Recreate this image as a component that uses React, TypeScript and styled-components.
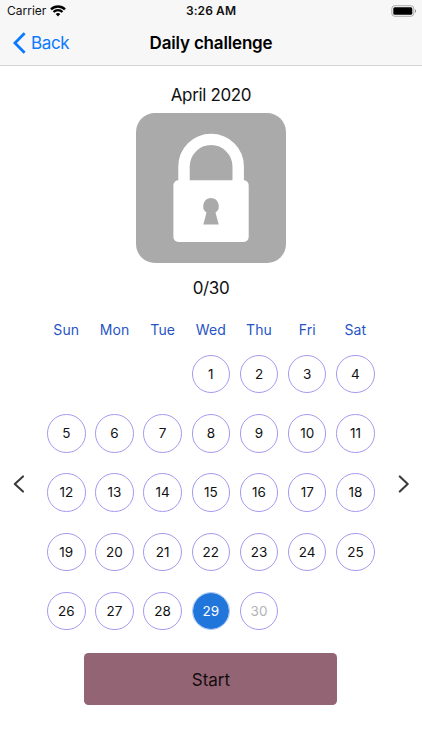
import React from "react";
import styled, { createGlobalStyle } from "styled-components";

const GlobalStyle = createGlobalStyle`
  *, *::before, *::after { box-sizing: border-box; }
  body { margin: 0; background: #fff; font-family: Inter, "Liberation Sans", sans-serif; color: #111; }
  button { font: inherit; color: inherit; background: none; border: 0; padding: 0; }
  svg { display: block; }
`;

const Screen = styled.div`
  width: 422px;
  height: 750px;
  display: flex;
  flex-direction: column;
  overflow: hidden;
`;

const Header = styled.header`
  height: 66px;
  flex: none;
  background: #f7f7f7;
  border-bottom: 1px solid #d4d4d4;
`;

const Bar = styled.div<{ $height: number }>`
  height: ${(p) => p.$height}px;
  display: grid;
  grid-template-columns: 1fr auto 1fr;
  align-items: center;
`;

const Carrier = styled.div`
  display: flex;
  align-items: center;
  gap: 4px;
  padding-left: 7px;
  font-size: 12px;
  letter-spacing: 0;
`;

const Clock = styled.div`
  font-size: 12px;
  font-weight: 600;
  letter-spacing: 0.1px;
`;

const BatterySlot = styled.div`
  justify-self: end;
  padding-right: 5px;
`;

const Back = styled.button`
  justify-self: start;
  display: flex;
  align-items: center;
  gap: 5px;
  padding-left: 13px;
  color: #0a7aff;
  font-size: 17px;
  letter-spacing: -0.35px;
`;

const Title = styled.h1`
  margin: 0;
  font-size: 17px;
  font-weight: 600;
  letter-spacing: -0.17px;
  color: #000;
`;

const Summary = styled.section`
  display: flex;
  flex-direction: column;
  align-items: center;
  padding-top: 18px;
`;

const Label = styled.div<{ $gap?: number }>`
  height: 22px;
  margin-top: ${(p) => p.$gap ?? 0}px;
  line-height: 22px;
  font-size: 17px;
  letter-spacing: -0.35px;
`;

const Badge = styled.div`
  width: 150px;
  height: 150px;
  margin-top: 7px;
  border-radius: 19px;
  background: #aaa;
`;

const CalendarRow = styled.section`
  display: grid;
  grid-template-columns: 42px 338px 42px;
  margin-top: 21px;
`;

const Arrow = styled.button<{ $side: "left" | "right" }>`
  display: flex;
  justify-content: ${(p) => (p.$side === "left" ? "flex-start" : "flex-end")};
  padding: 0 13px;
  height: 20px;
  margin-top: 154.3px;
`;

const Month = styled.div`
  display: grid;
  grid-template-columns: repeat(7, 48.2px);
  grid-template-rows: 19px;
  grid-auto-rows: 59.25px;
  justify-items: center;
  padding-left: 0.2px;
`;

const Weekday = styled.div`
  font-size: 14px;
  line-height: 19px;
  letter-spacing: 0.1px;
  color: #2754c5;
`;

const Day = styled.button<{ $first: boolean; $state: "open" | "today" | "future" }>`
  width: 38.5px;
  height: 38.5px;
  margin-top: 15.9px;
  grid-column-start: ${(p) => (p.$first ? 4 : "auto")};
  border: 1px solid ${(p) => (p.$state === "today" ? "#a9c6f2" : "#a59af0")};
  border-radius: 50%;
  background: ${(p) => (p.$state === "today" ? "#2176db" : "#fff")};
  background-clip: padding-box;
  color: ${(p) => ({ open: "#111", today: "#fff", future: "#b3b3b3" })[p.$state]};
  font-size: 13.5px;
  line-height: 36.5px;
  text-align: center;
`;

const Start = styled.button`
  flex: none;
  width: 253px;
  height: 52px;
  margin: 18px 0 0 84.4px;
  padding-top: 1px;
  border-radius: 4.5px;
  background: #936474;
  color: #140c10;
  font-size: 17px;
`;

const weekdays = ["Sun", "Mon", "Tue", "Wed", "Thu", "Fri", "Sat"];
const days = Array.from({ length: 30 }, (_, i) => i + 1);
const today = 29;

const stateOf = (day: number) => (day === today ? "today" : day > today ? "future" : "open");

function WifiIcon() {
  return (
    <svg width="16" height="12" viewBox="0 0 16 12" fill="none" stroke="#000" strokeWidth="2.3">
      <path d="M1 4.4a9.9 9.9 0 0 1 14 0" />
      <path d="M3.5 7a6.4 6.4 0 0 1 9 0" />
      <path d="M5.7 9.1a3.3 3.3 0 0 1 4.6 0L8 11.5z" fill="#000" stroke="none" />
    </svg>
  );
}

function BatteryIcon() {
  return (
    <svg width="26" height="12" viewBox="0 0 26 12">
      <rect x="0.8" y="0.7" width="22" height="10.6" rx="3" fill="none" stroke="#aaa" />
      <rect x="2.3" y="2.2" width="19" height="7.6" rx="1.5" fill="#000" />
      <path d="M24 4.2c1.4.5 1.4 3.1 0 3.6z" fill="#888" />
    </svg>
  );
}

function PadlockIcon() {
  return (
    <svg width="150" height="150" viewBox="0 0 150 150">
      <path d="M48 72V53.5a27.1 27.1 0 0 1 54.2 0V72" fill="none" stroke="#fff" strokeWidth="11.4" />
      <rect x="37.4" y="67.2" width="75.3" height="61.8" rx="5" fill="#fff" />
      <path d="M75 85a8.1 8.1 0 0 1 4.5 14.6L82.7 111.4H67.3L70.5 99.6A8.1 8.1 0 0 1 75 85z" fill="#aaa" />
    </svg>
  );
}

function Chevron({ d }: { d: string }) {
  return (
    <svg width="12" height="20" viewBox="0 0 12 20" fill="none" stroke="#3c3c3f" strokeWidth="2.1">
      <path d={d} strokeLinecap="round" strokeLinejoin="round" />
    </svg>
  );
}

export default function App() {
  return (
    <Screen>
      <GlobalStyle />
      <Header>
        <Bar $height={21}>
          <Carrier>
            Carrier
            <WifiIcon />
          </Carrier>
          <Clock>3:26 AM</Clock>
          <BatterySlot>
            <BatteryIcon />
          </BatterySlot>
        </Bar>
        <Bar $height={44}>
          <Back>
            <svg width="13" height="22" viewBox="0 0 13 22" fill="none" stroke="currentColor" strokeWidth="2.8">
              <path d="M11.6 1.2 1.9 11l9.7 9.8" />
            </svg>
            Back
          </Back>
          <Title>Daily challenge</Title>
        </Bar>
      </Header>
      <Summary>
        <Label>April 2020</Label>
        <Badge>
          <PadlockIcon />
        </Badge>
        <Label $gap={14}>0/30</Label>
      </Summary>
      <CalendarRow>
        <Arrow $side="left" aria-label="Previous month">
          <Chevron d="M10 2.4 1.8 10l8.2 7.6" />
        </Arrow>
        <Month>
          {weekdays.map((name) => (
            <Weekday key={name}>{name}</Weekday>
          ))}
          {days.map((day) => (
            <Day key={day} $first={day === 1} $state={stateOf(day)}>
              {day}
            </Day>
          ))}
        </Month>
        <Arrow $side="right" aria-label="Next month">
          <Chevron d="M2.8 2.4 10.7 10l-7.9 7.6" />
        </Arrow>
      </CalendarRow>
      <Start>Start</Start>
    </Screen>
  );
}
